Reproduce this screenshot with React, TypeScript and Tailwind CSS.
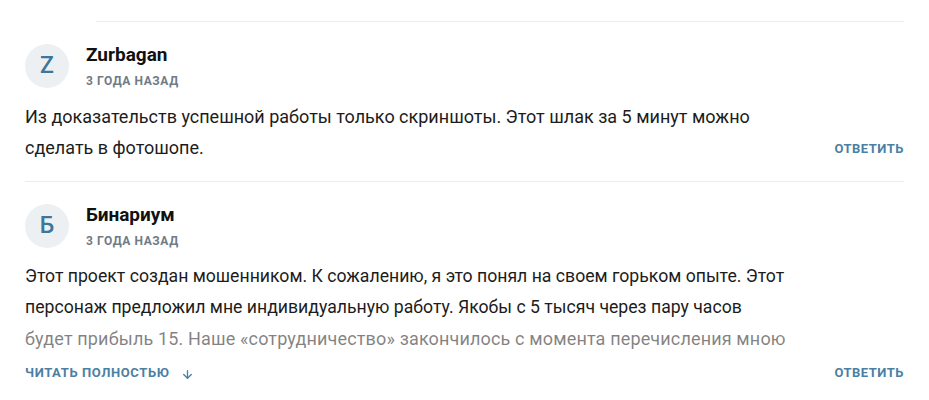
import { ArrowDown } from "lucide-react";

type Line = { text: string; cls: string };

type CommentData = {
  initial: string;
  author: string;
  date: string;
  lines: Line[];
  collapsed?: boolean;
};

const comments: CommentData[] = [
  {
    initial: "Z",
    author: "Zurbagan",
    date: "3 года назад",
    lines: [
      { text: "Из доказательств успешной работы только скриншоты. Этот шлак за 5 минут можно", cls: "text-[18px]" },
      { text: "сделать в фотошопе.", cls: "text-[18px]" },
    ],
  },
  {
    initial: "Б",
    author: "Бинариум",
    date: "3 года назад",
    lines: [
      {
        text: "Этот проект создан мошенником. К сожалению, я это понял на своем горьком опыте. Этот",
        cls: "text-[17.65px]",
      },
      {
        text: "персонаж предложил мне индивидуальную работу. Якобы с 5 тысяч через пару часов",
        cls: "text-[17.65px]",
      },
      {
        text: "будет прибыль 15. Наше «сотрудничество» закончилось с момента перечисления мною",
        cls: "text-[18px] tracking-[0.15px]",
      },
    ],
    collapsed: true,
  },
];

function Header({ c }: { c: CommentData }) {
  return (
    <div className="flex items-start">
      <div className="w-[44px] h-[44px] rounded-full bg-[#edf0f3] flex items-center justify-center text-[23px] font-medium text-[#3f7596] shrink-0">
        {c.initial}
      </div>
      <div className="ml-[17px]">
        <div className="text-[19px] leading-[22px] font-bold text-[#111]">{c.author}</div>
        <div className="mt-[7px] text-[12px] leading-[16px] font-bold uppercase tracking-[0.6px] text-[#717b86]">
          {c.date}
        </div>
      </div>
    </div>
  );
}

function ReplyButton() {
  return (
    <button className="text-[13px] leading-[16px] font-bold uppercase tracking-[0.5px] text-[#4b80a3] shrink-0">
      Ответить
    </button>
  );
}

function Lines({ lines }: { lines: Line[] }) {
  return (
    <p className="leading-[31px] text-[#1c1c1c]">
      {lines.map((l) => (
        <span key={l.text} className={`block whitespace-nowrap ${l.cls}`}>
          {l.text}
        </span>
      ))}
    </p>
  );
}

function Comment({ c }: { c: CommentData }) {
  if (!c.collapsed) {
    return (
      <div className="pt-[22px] pb-[18px] border-b border-[#ececec]">
        <Header c={c} />
        <div className="mt-[12px] flex items-end justify-between">
          <Lines lines={c.lines} />
          <div className="pb-[3px]">
            <ReplyButton />
          </div>
        </div>
      </div>
    );
  }
  return (
    <div className="pt-[22px]">
      <Header c={c} />
      <div className="relative mt-[12px] h-[93px] overflow-hidden">
        <Lines lines={c.lines} />
        {/* fade over the last visible line */}
        <div className="absolute left-0 right-0 top-[62px] h-[31px] bg-white/45" />
      </div>
      <div className="mt-[11px] flex items-center justify-between">
        <button className="flex items-center text-[13px] leading-[16px] font-bold uppercase tracking-[0.6px] text-[#4b80a3]">
          Читать полностью
          <ArrowDown size={13} strokeWidth={2.5} className="ml-[11px] mt-[2px]" />
        </button>
        <ReplyButton />
      </div>
    </div>
  );
}

export default function App() {
  return (
    <div className="w-[929px] h-[400px] bg-white overflow-hidden font-['Roboto',sans-serif]">
      <div className="pt-[21px] pl-[25px] pr-[25px]">
        <div className="ml-[71px] border-t border-[#ececec]" />
        {comments.map((c) => (
          <Comment key={c.author} c={c} />
        ))}
      </div>
    </div>
  );
}
